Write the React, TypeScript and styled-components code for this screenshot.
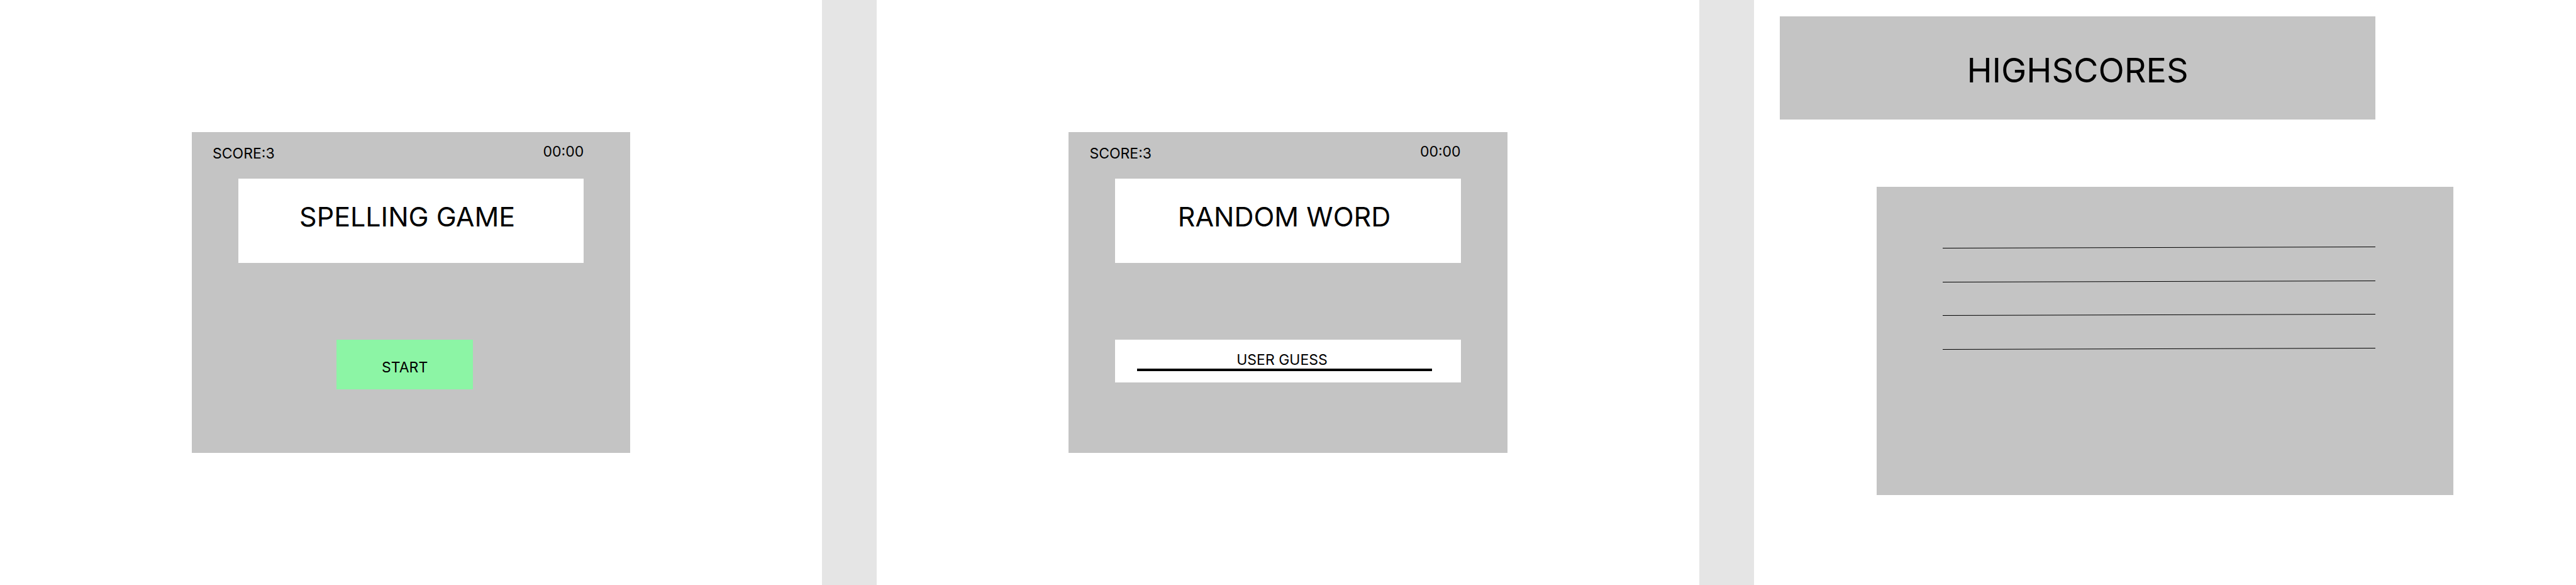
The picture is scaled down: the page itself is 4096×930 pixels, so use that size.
import React from "react";
import styled, { createGlobalStyle } from "styled-components";

const GlobalStyle = createGlobalStyle`
  *, *::before, *::after { box-sizing: border-box; }
  body {
    margin: 0;
    background: #e5e5e5;
    color: #000;
    font-family: Inter, "Liberation Sans", sans-serif;
  }
`;

const Board = styled.main`
  display: grid;
  grid-template-columns: repeat(3, minmax(0, 1fr));
  column-gap: 87px;
  min-height: 100vh;
`;

const Screen = styled.section<{ $centered?: boolean }>`
  display: flex;
  flex-direction: column;
  align-items: ${(p) => (p.$centered ? "center" : "flex-start")};
  justify-content: ${(p) => (p.$centered ? "center" : "flex-start")};
  background: #fff;
`;

const GameCard = styled.div`
  display: flex;
  flex-direction: column;
  width: 53.33%;
  min-height: 510px;
  padding: 17px 74px 0;
  background: #c4c4c4;
`;

const StatusBar = styled.header`
  display: flex;
  justify-content: space-between;
  height: 31px;
  margin-left: -41px;
  font-size: 23px;
  line-height: 28px;
`;

const Score = styled.span`
  align-self: flex-end;
`;

const Timer = styled.time`
  align-self: flex-start;
`;

const WordPanel = styled.div`
  display: flex;
  align-items: center;
  justify-content: center;
  height: 134px;
  margin: 26px 0 122px;
  padding: 0 12px 14px 0;
  background: #fff;
`;

const Title = styled.h1<{ $large?: boolean }>`
  margin: 0;
  font-size: ${(p) => (p.$large ? 54 : 43)}px;
  line-height: ${(p) => (p.$large ? 68 : 54)}px;
  font-weight: 400;
  white-space: nowrap;
`;

const Actions = styled.div`
  display: flex;
  justify-content: center;
  padding-right: 20px;
`;

const StartButton = styled.button`
  width: 217px;
  height: 79px;
  padding: 8px 0 0;
  border: 0;
  background: #8cf5a5;
  color: inherit;
  font: inherit;
  font-size: 23px;
  line-height: 28px;
  cursor: pointer;
`;

const GuessForm = styled.form`
  display: flex;
  align-items: flex-start;
  height: 68px;
  padding: 0 46px 0 35px;
  background: #fff;
`;

const GuessInput = styled.input`
  width: 100%;
  height: 50px;
  padding: 18px 8px 0 0;
  border: 0;
  border-bottom: 4px solid #000;
  border-radius: 0;
  outline: 0;
  background: transparent;
  color: inherit;
  font: inherit;
  font-size: 23px;
  line-height: 28px;
  text-align: center;

  &::placeholder {
    color: #000;
    opacity: 1;
  }
`;

const Banner = styled.header`
  display: flex;
  align-items: center;
  justify-content: center;
  width: 72.5%;
  height: 164px;
  margin: 26px 0 107px 41px;
  padding-top: 8px;
  background: #c4c4c4;
`;

const ScorePanel = styled.div`
  width: 70.14%;
  min-height: 490px;
  margin-left: 195px;
  padding: 95px 124px 0 105px;
  background: #c4c4c4;
`;

const ScoreList = styled.ol`
  display: flex;
  flex-direction: column;
  justify-content: space-between;
  height: 164px;
  margin: 0;
  padding: 0;
  list-style: none;
`;

const ScoreRow = styled.li`
  display: flex;
`;

const RuledLine = styled.svg`
  display: block;
  width: 100%;
  height: 3px;
`;

function Status({ score, time }: { score: number; time: string }) {
  return (
    <StatusBar>
      <Score>{`SCORE:${score}`}</Score>
      <Timer>{time}</Timer>
    </StatusBar>
  );
}

export default function App() {
  return (
    <>
      <GlobalStyle />
      <Board>
        <Screen $centered>
          <GameCard>
            <Status score={3} time="00:00" />
            <WordPanel>
              <Title>SPELLING GAME</Title>
            </WordPanel>
            <Actions>
              <StartButton type="button">START</StartButton>
            </Actions>
          </GameCard>
        </Screen>

        <Screen $centered>
          <GameCard>
            <Status score={3} time="00:00" />
            <WordPanel>
              <Title>RANDOM WORD</Title>
            </WordPanel>
            <GuessForm onSubmit={(e) => e.preventDefault()}>
              <GuessInput type="text" aria-label="User guess" placeholder="USER GUESS" />
            </GuessForm>
          </GameCard>
        </Screen>

        <Screen>
          <Banner>
            <Title $large>HIGHSCORES</Title>
          </Banner>
          <ScorePanel>
            <ScoreList>
              {[1, 2, 3, 4].map((rank) => (
                <ScoreRow key={rank}>
                  <RuledLine aria-hidden="true">
                    <line x1="0" y1="2.5" x2="100%" y2="0.5" stroke="#000" strokeWidth="1" />
                  </RuledLine>
                </ScoreRow>
              ))}
            </ScoreList>
          </ScorePanel>
        </Screen>
      </Board>
    </>
  );
}
